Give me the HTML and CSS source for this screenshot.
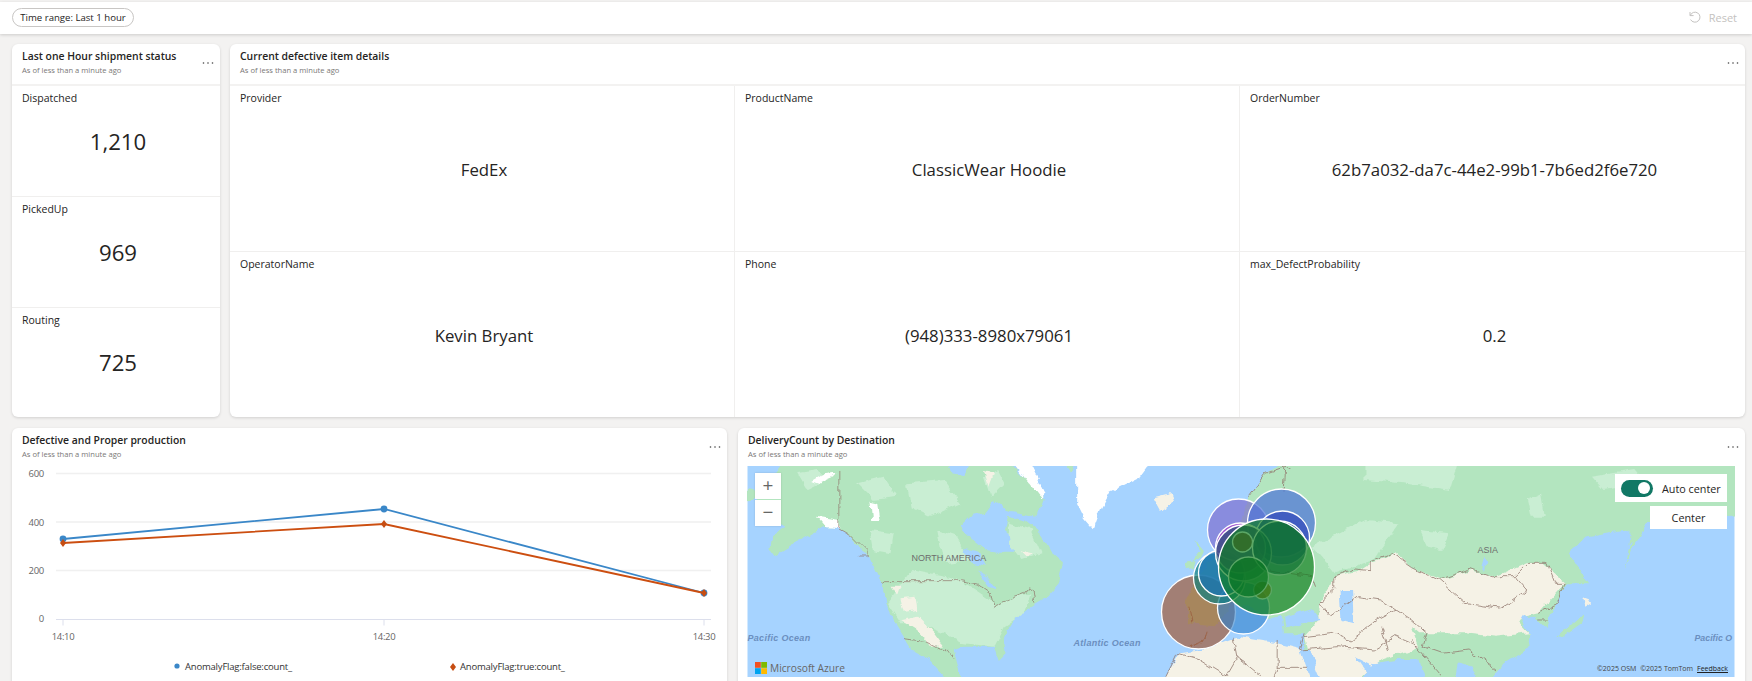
FILE: index.html
```html
<!DOCTYPE html>
<html lang="en">
<head>
<meta charset="utf-8">
<title>Dashboard</title>
<link rel="stylesheet" href="styles.css">
</head>
<body>
<header class="toolbar">
  <span class="pill">Time range: Last 1 hour</span>
  <span class="reset">
    <svg class="reset-icon" viewBox="0 0 12 12"><path d="M1 1v3.6h3.6M1.3 4.4A5 5 0 1 1 1.6 8.6"/></svg>
    Reset
  </span>
</header>
<main class="board">
  <section class="row row-top">
    <article class="card">
      <div class="card-head">
        <div><h2>Last one Hour shipment status</h2><p>As of less than a minute ago</p></div>
        <svg class="dots" viewBox="0 0 12 4"><circle cx="1.5" cy="2" r=".8"/><circle cx="6" cy="2" r=".8"/><circle cx="10.5" cy="2" r=".8"/></svg>
      </div>
      <div class="stack">
        <div class="cell"><div class="label">Dispatched</div><div class="value big">1,210</div></div>
        <div class="cell"><div class="label">PickedUp</div><div class="value big">969</div></div>
        <div class="cell"><div class="label">Routing</div><div class="value big">725</div></div>
      </div>
    </article>
    <article class="card">
      <div class="card-head">
        <div><h2>Current defective item details</h2><p>As of less than a minute ago</p></div>
        <svg class="dots" viewBox="0 0 12 4"><circle cx="1.5" cy="2" r=".8"/><circle cx="6" cy="2" r=".8"/><circle cx="10.5" cy="2" r=".8"/></svg>
      </div>
      <div class="details">
        <div class="cell"><div class="label">Provider</div><div class="value">FedEx</div></div>
        <div class="cell"><div class="label">ProductName</div><div class="value">ClassicWear Hoodie</div></div>
        <div class="cell"><div class="label">OrderNumber</div><div class="value">62b7a032-da7c-44e2-99b1-7b6ed2f6e720</div></div>
        <div class="cell"><div class="label">OperatorName</div><div class="value">Kevin Bryant</div></div>
        <div class="cell"><div class="label">Phone</div><div class="value">(948)333-8980x79061</div></div>
        <div class="cell"><div class="label">max_DefectProbability</div><div class="value">0.2</div></div>
      </div>
    </article>
  </section>
  <section class="row row-bottom">
    <article class="card">
      <div class="card-head plain">
        <div><h2>Defective and Proper production</h2><p>As of less than a minute ago</p></div>
        <svg class="dots" viewBox="0 0 12 4"><circle cx="1.5" cy="2" r=".8"/><circle cx="6" cy="2" r=".8"/><circle cx="10.5" cy="2" r=".8"/></svg>
      </div>
      <svg class="chart" viewBox="12 462 715 218">
        <g class="grid-lines">
          <path d="M56 473.5H711M56 522H711M56 570.5H711"/>
        </g>
        <path class="axis" d="M56 619.5H711M63 619.5v6M384 619.5v6M704 619.5v6"/>
        <g class="tick">
          <text x="44" y="477" text-anchor="end">600</text>
          <text x="44" y="526" text-anchor="end">400</text>
          <text x="44" y="574" text-anchor="end">200</text>
          <text x="44" y="622" text-anchor="end">0</text>
          <text x="63" y="640" text-anchor="middle">14:10</text>
          <text x="384" y="640" text-anchor="middle">14:20</text>
          <text x="704" y="640" text-anchor="middle">14:30</text>
        </g>
        <polyline class="line-blue" points="63,539 384,509 704,593"/>
        <g class="pt-blue"><circle cx="63" cy="539" r="3.4"/><circle cx="384" cy="509" r="3.4"/><circle cx="704" cy="593" r="3.4"/></g>
        <polyline class="line-orange" points="63,543 384,524 704,593"/>
        <g class="pt-orange">
          <path d="M63 539l3 4-3 4-3-4z"/><path d="M384 520l3 4-3 4-3-4z"/><path d="M704 589l3 4-3 4-3-4z"/>
        </g>
        <circle class="pt-blue" cx="177" cy="666" r="2.6"/>
        <text class="legend" x="185" y="670">AnomalyFlag:false:count_</text>
        <path class="pt-orange" d="M453 663l3 4-3 4-3-4z"/>
        <text class="legend" x="460" y="670">AnomalyFlag:true:count_</text>
      </svg>
    </article>
    <article class="card">
      <div class="card-head plain">
        <div><h2>DeliveryCount by Destination</h2><p>As of less than a minute ago</p></div>
        <svg class="dots" viewBox="0 0 12 4"><circle cx="1.5" cy="2" r=".8"/><circle cx="6" cy="2" r=".8"/><circle cx="10.5" cy="2" r=".8"/></svg>
      </div>
      <div class="map">
        <svg class="map-svg" viewBox="0 0 987 211">
          <defs>
            <filter id="rough" x="0" y="0" width="100%" height="100%" color-interpolation-filters="sRGB">
              <feTurbulence type="fractalNoise" baseFrequency=".09" numOctaves="3" seed="4" result="n"/>
              <feDisplacementMap in="SourceGraphic" in2="n" scale="7" xChannelSelector="R" yChannelSelector="G"/>
              <feGaussianBlur stdDeviation=".35"/>
            </filter>
          </defs>
          <rect class="water" width="987" height="211"/>
          <g class="terrain">
            <g transform="translate(-17 -46) scale(.33333)">
              <path class="land" d="M155,130 L130,165 L150,190 L100,205 L70,225 L85,255 L110,255 L75,280 L95,300 L130,300 L165,320 L125,345 L120,385 L135,405 L185,375 L240,345 L275,325 L325,325 L360,345 L385,390 L415,410 L440,460 L455,490 L465,550 L495,610 L520,650 L545,690 L590,715 L640,770 L640,790 L700,790 L680,730 L670,690 L700,680 L760,680 L790,680 L805,720 L825,700 L820,650 L850,600 L900,560 L950,530 L985,490 L1000,430 L965,400 L930,340 L880,300 L830,290 L820,330 L870,370 L860,395 L800,395 L770,390 L720,350 L690,320 L720,290 L760,280 L790,240 L830,270 L920,290 L940,235 L880,170 L840,130 L720,130 L700,165 L670,160 L650,130 Z"/>
              <path class="land" d="M50,210 L75,215 L70,240 L40,245 Z M1000,130 L1030,130 L1020,160 Z"/>
              <path class="land-light" d="M540,450 L690,480 L780,540 L790,560 L860,530 L900,520 L880,580 L820,620 L790,680 L700,670 L640,640 L560,610 L510,610 L470,550 Z"/>
              <path class="land-light" d="M530,190 L640,180 L690,250 L600,290 L540,260 Z M380,190 L460,170 L500,230 L430,240 Z M830,310 L900,330 L930,400 L870,420 L840,380 Z M760,170 L800,150 L820,190 L780,230 Z M200,160 L260,150 L290,180 L230,210 Z M620,330 L680,350 L720,420 L640,430 Z M420,330 L490,340 L480,400 L430,390 Z"/>
              <path class="snow" d="M245,180 L280,160 L315,155 L305,175 L270,190 Z M420,245 L440,250 L447,300 L425,300 Z M262,290 L325,300 L330,328 L290,325 Z"/>
              <path class="cream" d="M510,535 L555,530 L560,570 L520,575 Z M512,600 L560,590 L610,640 L640,680 L600,680 L560,630 Z M480,500 L510,500 L500,530 Z M760,150 L790,160 L775,200 Z M1270,235 L1320,222 L1330,245 L1290,270 Z M870,390 L910,400 L890,410 Z"/>
              <path class="snow" d="M1040,130 L1260,130 L1230,170 L1140,215 L1110,270 L1090,325 L1060,290 L1040,250 Z M850,130 L900,130 L945,220 L930,235 L880,170 Z"/>
              <path class="land" d="M1395,360 L1420,390 L1412,416 L1385,418 L1405,390 Z M1370,425 L1395,420 L1390,445 L1368,448 Z"/>
              <path class="water-shape" d="M700,385 L750,400 L770,440 L720,430 Z M740,450 L770,470 L800,510 L775,500 Z"/>
              <path class="border" d="M325,150 L325,325 L360,345 L385,370 L410,395 L410,408 L385,408 M455,490 L465,482 L690,482 L740,492 L780,520 L790,560 L820,545 L885,520 L895,500 L905,510 L910,545 M515,655 L585,665 L625,685 L650,690 L670,715"/>
            </g>
            <g transform="translate(403 -46) scale(.3839 .33333)">
              <path class="cream" d="M30,790 L75,700 L130,690 L225,650 L330,670 L400,690 L430,790 Z"/>
              <path class="land" d="M340,130 L300,160 L255,230 L240,300 L200,340 L170,400 L120,470 L95,545 L95,610 L165,615 L215,550 L260,560 L310,600 L340,590 L345,640 L400,640 L400,690 L430,790 L880,790 L920,730 L990,680 L985,640 L960,590 L1000,590 L1030,630 L1040,590 L1085,490 L1140,490 L1110,440 L1090,400 L1130,350 L1230,330 L1260,340 L1235,450 L1265,360 L1290,310 L1350,300 L1540,285 L1540,130 Z"/>
              <path class="land-light" d="M420,380 L560,300 L650,310 L580,420 L480,460 Z M560,130 L800,130 L780,210 L660,190 L560,180 Z M980,240 L1020,220 L1030,290 L990,290 Z M1150,170 L1260,150 L1290,190 L1180,210 Z M700,330 L780,340 L760,390 L720,380 Z M970,480 L1040,470 L1020,540 L980,530 Z"/>
              <path class="cream" d="M480,470 L540,455 L575,430 L640,400 L680,440 L760,480 L830,450 L900,470 L980,430 L1020,430 L1080,490 L1040,540 L1010,580 L970,590 L960,610 L985,640 L900,650 L820,640 L700,640 L680,620 L700,680 L600,720 L530,790 L430,790 L400,650 L440,600 L440,550 Z"/>
              <path class="land" d="M1060,650 L1130,580 L1125,610 L1070,655 Z M1250,310 L1285,315 L1245,380 Z"/>
              <path class="cream" d="M1125,535 L1150,545 L1130,560 Z M10,240 L55,225 L60,245 L25,272 Z"/>
              <path class="water-shape" d="M345,590 L420,565 L445,600 L350,625 Z M495,510 L525,510 L530,610 L500,600 Z M390,690 L415,690 L450,790 L420,790 Z M530,710 L580,740 L560,760 Z M540,790 L580,730 L640,720 L700,720 L720,790 Z M790,790 L800,730 L840,740 L860,790 Z M870,410 L880,430 L860,450 Z"/>
              <path class="border" d="M480,505 L480,470 L530,450 L575,455 L575,425 L630,400 L680,440 L750,480 L800,460 L830,445 L890,470 L950,470 L985,430 L1030,430 L1050,490 L1080,490 L1060,550 L1010,580 M750,480 L790,520 L820,550 L910,565 L980,510 L950,470 M480,510 L440,550 L470,590 L540,530 L600,540 L640,570 L680,600 L720,640 L710,680 L760,700 L830,690 L900,750 M400,650 L480,640 L520,660 L590,600 L640,570 M580,690 L640,650 L700,680 M400,640 L390,690 L490,680 L580,690 M600,620 L620,690 M680,660 L760,770 M40,770 L70,700 L130,720 L200,770 M215,650 L225,710 L195,770 M330,660 L330,745 L410,745 M330,745 L320,770 M225,710 L290,770 M255,230 L300,160 L350,140 L365,150 M350,140 L345,215 M100,560 L108,610 M150,635 L145,660 L100,680 M310,450 L420,470 L430,500 M1010,600 L1035,600"/>
            </g>
          </g>
          <g class="bubbles">
            <circle class="b-brown" cx="451" cy="146" r="37"/>
            <circle class="b-sky" cx="496" cy="142" r="26"/>
            <circle class="b-teal" cx="472" cy="112" r="26"/>
            <circle class="b-blue" cx="474" cy="107" r="23"/>
            <circle class="b-lilac" cx="491" cy="64" r="31"/>
            <circle class="b-royal" cx="534" cy="57" r="34"/>
            <circle class="b-indigo" cx="535" cy="72" r="27"/>
            <circle class="b-magenta" cx="493" cy="82" r="25"/>
            <circle class="b-navy" cx="496" cy="87" r="28"/>
            <circle class="b-brown" cx="495" cy="76" r="10"/>
            <circle class="b-navy" cx="532" cy="82" r="27"/>
            <circle class="b-olive" cx="515" cy="124" r="9"/>
            <circle class="b-forest" cx="501" cy="111" r="20"/>
            <circle class="b-green" cx="519" cy="101" r="48"/>
          </g>
          <g class="map-labels">
            <text class="continent" x="164" y="95">NORTH AMERICA</text>
            <text class="continent" x="730" y="87">ASIA</text>
            <text class="ocean" x="0" y="175">Pacific Ocean</text>
            <text class="ocean" x="326" y="180">Atlantic Ocean</text>
            <text class="ocean ocean-edge" x="947" y="175">Pacific O</text>
          </g>
        </svg>
        <div class="zoom-ctrl"><span class="zoom-btn">+</span><span class="zoom-btn">−</span></div>
        <div class="center-ctrl">
          <div class="auto"><span class="toggle"><span class="knob"></span></span><span>Auto center</span></div>
          <div class="center-btn">Center</div>
        </div>
        <div class="brand">
          <svg class="ms-logo" viewBox="0 0 12 12"><rect class="ms-r" width="5.8" height="5.8"/><rect class="ms-g" x="6.2" width="5.8" height="5.8"/><rect class="ms-b" y="6.2" width="5.8" height="5.8"/><rect class="ms-y" x="6.2" y="6.2" width="5.8" height="5.8"/></svg>
          <span>Microsoft Azure</span>
        </div>
        <div class="attrib"><span>©2025 OSM</span><span>©2025 TomTom</span><span class="feedback">Feedback</span></div>
      </div>
    </article>
  </section>
</main>
</body>
</html>
```
FILE: styles.css
```css
* { box-sizing: border-box; }
html, body { margin: 0; height: 100%; overflow: hidden; }
body {
  background: #f3f2f1;
  font-family: "Open Sans", "Noto Sans", "Liberation Sans", sans-serif;
  color: #252423;
  padding-top: 2px;
}
.toolbar {
  height: 32px;
  background: #fff;
  box-shadow: 0 1px 3px rgba(0,0,0,.16);
  display: flex;
  align-items: center;
  justify-content: space-between;
  padding: 0 15px 2px 12px;
}
.pill {
  height: 19px;
  width: 122px;
  border: 1px solid #c8c6c4;
  border-radius: 10px;
  font-size: 9.6px;
  line-height: 17px;
  text-align: center;
  white-space: nowrap;
}
.reset { display: flex; align-items: center; gap: 8px; font-size: 11px; color: #c4c2c0; }
.reset-icon { width: 12px; height: 12px; fill: none; stroke: #c4c2c0; stroke-width: 1; }
.board { padding: 10px 7px 0 12px; display: flex; flex-direction: column; gap: 11px; }
.row { display: grid; }
.row-top { grid-template-columns: 208px 1fr; gap: 10px; height: 373px; }
.row-bottom { grid-template-columns: 715px 1fr; gap: 11px; height: 262px; }
.card {
  background: #fff;
  border-radius: 6px;
  box-shadow: 0 1px 3px rgba(0,0,0,.14);
  display: flex;
  flex-direction: column;
  overflow: hidden;
  min-width: 0;
}
.card-head {
  height: 42px;
  flex: none;
  padding: 4px 6px 0 10px;
  display: flex;
  justify-content: space-between;
  align-items: flex-start;
  border-bottom: 2px solid #f3f2f1;
}
.card-head.plain { border-bottom: 0; height: 34px; }
.card-head h2 { margin: 0; font-size: 10.4px; font-weight: 600; line-height: 16px; white-space: nowrap; }
.card-head p { margin: 0; font-size: 7.6px; line-height: 13px; color: #7a7876; white-space: nowrap; }
.dots { width: 12px; height: 4px; margin-top: 13px; fill: #444; flex: none; }
.stack { flex: 1; display: grid; grid-template-rows: repeat(3, 1fr); }
.details { flex: 1; display: grid; grid-template-columns: repeat(3, 1fr); grid-template-rows: 166px 1fr; }
.cell { display: flex; flex-direction: column; min-width: 0; }
.stack .cell + .cell { border-top: 1px solid #f0efee; }
.details .cell { border-right: 1px solid #f0efee; border-bottom: 1px solid #f0efee; }
.details .cell:nth-child(3n) { border-right: 0; }
.details .cell:nth-child(n+4) { border-bottom: 0; }
.label { height: 28px; flex: none; padding: 4px 10px 0; font-size: 10.5px; line-height: 16px; }
.value {
  flex: 1;
  margin-top: -27px;
  padding-left: 4px;
  display: flex;
  align-items: center;
  justify-content: center;
  font-size: 16.8px;
  white-space: nowrap;
}
.value.big { font-size: 22.2px; }
.chart { width: 715px; height: 218px; flex: none; display: block; }
.grid-lines path { fill: none; stroke: #f0f0f0; stroke-width: 1.4; }
.axis { fill: none; stroke: #dcdfec; stroke-width: 1; }
.tick text { font-size: 9.5px; fill: #666; letter-spacing: -.3px; }
.legend { font-size: 9.5px; fill: #333; letter-spacing: -.2px; }
.line-blue { fill: none; stroke: #3a87c8; stroke-width: 1.8; }
.line-orange { fill: none; stroke: #cc4e10; stroke-width: 1.8; }
.pt-blue { fill: #3a87c8; }
.pt-orange { fill: #c64d12; }
.map {
  position: relative;
  margin: 4px 10px 0 9px;
  height: 211px;
  overflow: hidden;
  flex: none;
}
.map-svg { display: block; width: 100%; height: 100%; }
.water { fill: #a6d3ff; }
.terrain { filter: url(#rough); }
.land { fill: #b3e5bf; }
.land-light { fill: #c9eed3; }
.cream { fill: #f5f2e6; }
.snow { fill: #fff; }
.water-shape { fill: #a6d3ff; }
.border { fill: none; stroke: #92796f; stroke-width: 2.6; stroke-opacity: .85; }
.bubbles circle { stroke: #fff; stroke-width: 1.3; }
.b-brown { fill: #a04c20; fill-opacity: .62; }
.b-sky { fill: #2b7fcb; fill-opacity: .6; }
.b-teal { fill: #0f7f80; fill-opacity: .7; }
.b-blue { fill: #1c74b8; fill-opacity: .7; }
.b-lilac { fill: #7a66cc; fill-opacity: .65; }
.b-royal { fill: #4c72d8; fill-opacity: .7; }
.b-indigo { fill: #2b3fb8; fill-opacity: .65; }
.b-magenta { fill: #a63ac8; fill-opacity: .7; }
.b-navy { fill: #10506a; fill-opacity: .6; }
.b-olive { fill: #a87010; fill-opacity: .8; }
.b-forest { fill: #086a30; fill-opacity: .7; }
.b-green { fill: #0e7d1c; fill-opacity: .68; }
.map-labels text { font-family: "Liberation Sans", sans-serif; }
.continent { font-size: 9px; fill: #6d6d6d; }
.ocean { font-size: 9px; font-weight: 700; font-style: italic; fill: #6b8fc0; letter-spacing: .3px; }
.ocean-edge { letter-spacing: 0; font-size: 8.8px; }
.zoom-ctrl {
  position: absolute;
  left: 8px;
  top: 7px;
  width: 26px;
  display: flex;
  flex-direction: column;
  gap: 1px;
  box-shadow: 0 0 2px rgba(0,0,0,.15);
}
.zoom-btn {
  height: 26px;
  background: #fff;
  color: #666;
  font-size: 19px;
  line-height: 25px;
  text-align: center;
}
.center-ctrl {
  position: absolute;
  right: 8px;
  top: 8px;
  width: 112px;
  display: flex;
  flex-direction: column;
  align-items: flex-end;
  gap: 4px;
  font-size: 10.8px;
}
.auto {
  width: 112px;
  height: 28px;
  background: #fff;
  display: flex;
  align-items: center;
  gap: 9px;
  padding-left: 6px;
  white-space: nowrap;
}
.toggle {
  width: 32px;
  height: 17px;
  border-radius: 9px;
  background: #117865;
  display: flex;
  align-items: center;
  justify-content: flex-end;
  padding-right: 3px;
  flex: none;
}
.knob { width: 12px; height: 12px; border-radius: 50%; background: #fff; }
.center-btn { width: 77px; height: 23px; background: #fff; line-height: 23px; text-align: center; }
.brand {
  position: absolute;
  left: 8px;
  bottom: 2px;
  display: flex;
  align-items: center;
  gap: 3px;
  font-size: 10.2px;
  color: #666;
}
.ms-logo { width: 12px; height: 12px; }
.ms-r { fill: #f25022; }
.ms-g { fill: #7fba00; }
.ms-b { fill: #00a4ef; }
.ms-y { fill: #ffb900; }
.attrib {
  position: absolute;
  right: 7px;
  bottom: 3px;
  display: flex;
  gap: 4px;
  font-size: 7px;
  line-height: 11px;
  color: #444;
}
.feedback { text-decoration: underline; color: #222; }
```
